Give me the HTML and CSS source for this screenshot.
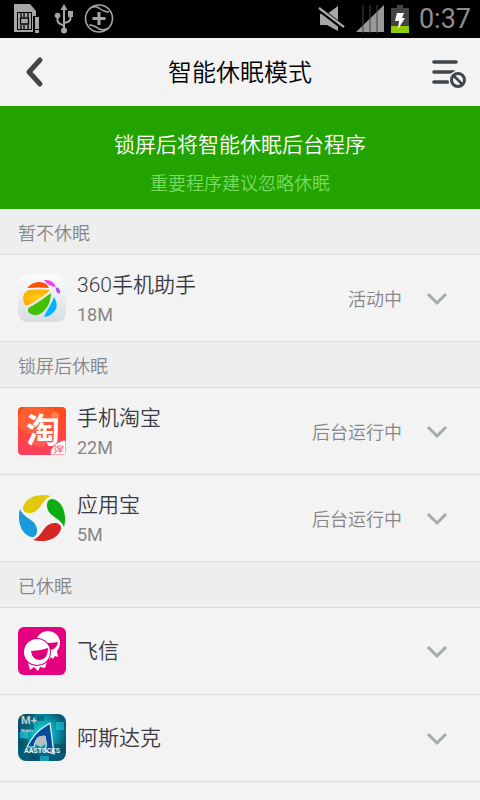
FILE: index.html
```html
<!DOCTYPE html>
<html lang="zh-CN">
<head>
    <meta charset="UTF-8">
    <meta name="viewport" content="width=device-width, initial-scale=1.0">
    <title>智能休眠模式</title>
    <link rel="stylesheet" href="styles.css">
</head>
<body>

<div class="statusbar">
    <div class="status-left">
        <svg width="28" height="32" viewBox="0 0 28 32" fill="#a6a6a6">
            <path d="M1 1h16l6 7v21H1z"/>
            <path d="M4 9h15v18H4z" fill="#000"/>
            <path d="M5 10h13v16H5z"/>
            <path d="M8 10v4M11 10v4M15 10v4M8 26v-4M11 26v-4M15 26v-4" fill="none" stroke="#000" stroke-width="1.3"/>
            <path d="M7.500 15h8v6h-8z" stroke="#000" stroke-width="1.3"/>
            <path d="M20 13h7v17h-7z" fill="#000"/>
            <path d="M22 14h4v12h-4zM22 27h4v3h-4z"/>
        </svg>
        <svg width="20" height="32" viewBox="0 0 20 32" fill="#a6a6a6">
            <path d="M10 5v22M3.500 13v4q0 3 3 4l3.500 2M16.500 11v4q0 3-3 4L10 20" fill="none" stroke="#a6a6a6" stroke-width="2"/>
            <path d="M10 1l3.500 6h-7zM14 8h5v6h-5z"/>
            <circle cx="3.500" cy="12.500" r="2.800"/>
            <circle cx="10" cy="27.500" r="3"/>
        </svg>
        <svg width="30" height="32" viewBox="0 0 30 32">
            <circle cx="15" cy="15.500" r="13.500" fill="none" stroke="#a6a6a6" stroke-width="1.600"/>
            <path d="M5 6Q10 2 15 5q5 4 10 4M5 22q5 0 10 4 5 2 10-1" fill="none" stroke="#a6a6a6" stroke-width="1.600"/>
            <path d="M15 9v13M8.500 15.500h13" stroke="#a6a6a6" stroke-width="3"/>
        </svg>
    </div>
    <div class="status-right">
        <svg width="28" height="28" viewBox="0 0 28 28">
            <path d="M2 9h7l11-8v25L9 20H2z" fill="#a6a6a6"/>
            <path d="M0 3l26 20" stroke="#000" stroke-width="5"/>
            <path d="M1 3l25 19" stroke="#a6a6a6" stroke-width="2.200"/>
        </svg>
        <svg width="28" height="28" viewBox="0 0 28 28">
            <path d="M28 0v27H0z" fill="#999"/>
            <path d="M7 0v28M14 0v28M21 0v28" stroke="#444" stroke-width="1"/>
        </svg>
        <svg width="18" height="28" viewBox="0 0 18 28">
            <path d="M6 0h6v3h6v25H0V3h6z" fill="#444"/>
            <path d="M0 21h18v7H0z" fill="#8fce00"/>
            <path d="M6 8h7l-2 5h3L7 24l1-8H4z" fill="#fff"/>
        </svg>
        <span class="clock">0:37</span>
    </div>
</div>

<header class="header">
    <button class="icon-button" aria-label="返回">
        <svg width="24" height="32" viewBox="0 0 24 32">
            <path d="M16 4L5 16l11 12" fill="none" stroke="#42464a" stroke-width="5" stroke-linecap="round" stroke-linejoin="round"/>
        </svg>
    </button>
    <h1>智能休眠模式</h1>
    <button class="icon-button" aria-label="忽略列表">
        <svg width="36" height="32" viewBox="0 0 36 32">
            <path d="M2 6h22M2 16h20M2 26h14" stroke="#42464a" stroke-width="3.600" stroke-linecap="round"/>
            <circle cx="26" cy="24" r="9.500" fill="#f3f3f3"/>
            <circle cx="26" cy="24" r="6.500" fill="none" stroke="#42464a" stroke-width="3"/>
            <path d="M21.500 19.500l9 9" stroke="#42464a" stroke-width="2.600"/>
        </svg>
    </button>
</header>

<div class="banner">
    <p class="banner-title">锁屏后将智能休眠后台程序</p>
    <p class="banner-tip">重要程序建议忽略休眠</p>
</div>

<main>
    <h2>暂不休眠</h2>
    <ul>
        <li>
            <svg class="app-icon" viewBox="0 0 48 48">
                <defs>
                    <linearGradient id="tile" x2="0" y2="1"><stop stop-color="#fcfcfd"/><stop offset="1" stop-color="#d8dde2"/></linearGradient>
                    <radialGradient id="amber"><stop stop-color="#ffd21a"/><stop offset="1" stop-color="#ffad00"/></radialGradient>
                </defs>
                <rect width="48" height="48" rx="9" fill="url(#tile)"/>
                <path d="M9 14Q14 8 21 8q8 0 10 6-10-1-22 0z" fill="#ff5000"/>
                <path d="M7 31C3 23 6 17 12 16q10-1 20 0Q22 26 10 31q-2 1-3 0z" fill="url(#amber)"/>
                <path d="M10 35q1-2 4-3 10-6 19-13 0 11-7 18-6 6-13 3-4-2-3-5z" fill="#3fc000"/>
                <path d="M36 23q4 6 2 12-4 7-12 8 1-3 4-8 4-6 6-12z" fill="#00b4ff"/>
                <path d="M26 6q9-1 12 7-7 0-12-7z" fill="#f53cf0"/>
                <ellipse cx="40" cy="16.500" rx="1.800" ry="3.200" transform="rotate(-25 40 16.500)" fill="#b750f5"/>
            </svg>
            <div class="app-info">
                <span class="app-name">360手机助手</span>
                <span class="app-size">18M</span>
            </div>
            <span class="app-state">活动中</span>
            <button class="expand" aria-label="展开 360手机助手">
                <svg width="24" height="16" viewBox="0 0 24 16"><path d="M3 4l9 9 9-9" fill="none" stroke="#a5abab" stroke-width="3"/></svg>
            </button>
        </li>
    </ul>

    <h2>锁屏后休眠</h2>
    <ul>
        <li>
            <svg class="app-icon" viewBox="0 0 48 48">
                <defs>
                    <linearGradient id="red" x2="0" y2="1"><stop stop-color="#ff4a14"/><stop offset="1" stop-color="#ff4060"/></linearGradient>
                    <clipPath id="round"><rect width="48" height="48" rx="4"/></clipPath>
                </defs>
                <g clip-path="url(#round)">
                    <rect width="48" height="48" fill="url(#red)"/>
                    <circle cx="14" cy="13" r="14" fill="#ff824c" opacity=".4"/>
                    <circle cx="29" cy="12" r="12" fill="#ff7040" opacity=".4"/>
                    <circle cx="37" cy="9" r="4" fill="#ff9160" opacity=".7"/>
                    <circle cx="22" cy="31" r="9" fill="#ff7950" opacity=".5"/>
                    <text class="tao" x="25" y="36">淘</text>
                    <path d="M32 48q0-11 14-15l2 1v14z" fill="#fff" stroke="#ff4858"/>
                    <path d="M36 39l2 1m-2 2h2v3l-2 1M39 39h6v2h-6zM40 42h4m-5 2h6m-3-2v4" stroke="#ff4060" stroke-width=".8" fill="none"/>
                </g>
            </svg>
            <div class="app-info">
                <span class="app-name">手机淘宝</span>
                <span class="app-size">22M</span>
            </div>
            <span class="app-state">后台运行中</span>
            <button class="expand" aria-label="展开 手机淘宝">
                <svg width="24" height="16" viewBox="0 0 24 16"><path d="M3 4l9 9 9-9" fill="none" stroke="#a5abab" stroke-width="3"/></svg>
            </button>
        </li>
        <li>
            <svg class="app-icon" viewBox="0 0 48 48">
                <defs>
                    <path id="blade" d="M33 2C23-1 8 2 5 13c-1 6 7 8 13 4 5-3 7-12 15-15z"/>
                </defs>
                <use href="#blade" fill="#e2c80a"/>
                <use href="#blade" fill="#0bae12" transform="rotate(90 24 24)"/>
                <use href="#blade" fill="#d62626" transform="rotate(180 24 24)"/>
                <use href="#blade" fill="#1a99dc" transform="rotate(270 24 24)"/>
            </svg>
            <div class="app-info">
                <span class="app-name">应用宝</span>
                <span class="app-size">5M</span>
            </div>
            <span class="app-state">后台运行中</span>
            <button class="expand" aria-label="展开 应用宝">
                <svg width="24" height="16" viewBox="0 0 24 16"><path d="M3 4l9 9 9-9" fill="none" stroke="#a5abab" stroke-width="3"/></svg>
            </button>
        </li>
    </ul>

    <h2>已休眠</h2>
    <ul>
        <li>
            <svg class="app-icon" viewBox="0 0 48 48">
                <rect width="48" height="48" rx="6" fill="#e4007f"/>
                <circle cx="30" cy="16" r="12" fill="#fff"/>
                <path d="M31 26l8-2 1 6-3-1-2 3-2-2-2 3z" fill="#fff"/>
                <path d="M29 16q6 0 11-1-1 7-8 8z" fill="#e4007f"/>
                <circle cx="19" cy="25" r="14" fill="#e4007f"/>
                <circle cx="19" cy="25" r="13" fill="#fff"/>
                <path d="M10 36l2 7 4-3 4 4 2-4 5 1 2-6q-9 6-19 1z" fill="#fff"/>
                <path d="M9 35q10 7 20 0" fill="none" stroke="#e4007f"/>
                <path d="M13 24q9 0 17-3 0 11-8 12-8 0-9-9z" fill="#e4007f"/>
                <path d="M17 30q5-5 11-2-3 4-6 4t-5-2z" fill="#c8006c"/>
            </svg>
            <div class="app-info">
                <span class="app-name">飞信</span>
            </div>
            <button class="expand" aria-label="展开 飞信">
                <svg width="24" height="16" viewBox="0 0 24 16"><path d="M3 4l9 9 9-9" fill="none" stroke="#a5abab" stroke-width="3"/></svg>
            </button>
        </li>
        <li>
            <svg class="app-icon" viewBox="0 0 48 48">
                <defs>
                    <radialGradient id="teal" cx=".5" cy=".4"><stop stop-color="#20dce2"/><stop offset=".6" stop-color="#0b98ad"/><stop offset="1" stop-color="#075b78"/></radialGradient>
                    <clipPath id="square"><rect width="48" height="47" rx="8"/></clipPath>
                </defs>
                <g clip-path="url(#square)">
                    <rect width="48" height="48" fill="url(#teal)"/>
                    <path d="M0 0h16v18H0zM0 25h10v9H0zM36 30h12v9H36zM19 2h7v5h-7zM12 40h9v8h-9z" fill="#064b62" opacity=".55"/>
                    <path d="M38 8h8v8h-8zM22 42h9v6h-9zM2 18h8v6H2z" fill="#29d9e5" opacity=".5"/>
                    <path d="M9 33q7-14 17-20l6-4 4 31-9-3q3-8-1-15-9 1-10 11z" fill="#074c9a" stroke="#d4fff0" stroke-width="1.200"/>
                    <path d="M17 30q0-6 5-8h6l-1 8-4 3z" fill="#b9bec5"/>
                    <text class="mobile-mark" x="3" y="10">M+</text>
                    <text class="mobile-label" x="3" y="18">Mobile</text>
                    <text class="stocks" x="24" y="39">AASTOCKS</text>
                </g>
            </svg>
            <div class="app-info">
                <span class="app-name">阿斯达克</span>
            </div>
            <button class="expand" aria-label="展开 阿斯达克">
                <svg width="24" height="16" viewBox="0 0 24 16"><path d="M3 4l9 9 9-9" fill="none" stroke="#a5abab" stroke-width="3"/></svg>
            </button>
        </li>
    </ul>
</main>

</body>
</html>
```
FILE: styles.css
```css
* {
    box-sizing: border-box;
    margin: 0;
    padding: 0;
}
body {
    font-family: Roboto, "Noto Sans CJK SC", sans-serif;
    font-weight: 350;
    background-color: #f3f3f3;
    color: #3b3b45;
}
button {
    border: none;
    background: none;
    cursor: pointer;
}
svg {
    display: block;
}
.statusbar {
    display: flex;
    justify-content: space-between;
    align-items: center;
    height: 38px;
    padding: 0 9px 0 13px;
    background: #000;
}
.status-left {
    display: flex;
    gap: 13px;
}
.status-left svg:last-child {
    margin-left: -3px;
}
.status-right {
    display: flex;
    align-items: center;
    gap: 10px;
}
.status-right svg:nth-child(3) {
    margin-left: -3px;
}
.clock {
    font-size: 27px;
    font-weight: 400;
    line-height: 38px;
    color: #8e8e8e;
}
.header {
    display: flex;
    justify-content: space-between;
    align-items: center;
    height: 68px;
    padding: 0 12px 4px;
}
.header h1 {
    font-size: 24px;
    font-weight: 350;
    color: #000;
}
.icon-button {
    display: flex;
    justify-content: flex-end;
    width: 36px;
    padding-top: 4px;
}
.banner {
    padding: 24px 0 10px;
    background: #22a300;
    text-align: center;
}
.banner-title {
    font-size: 21px;
    line-height: 30px;
    color: #fff;
}
.banner-tip {
    margin-top: 9px;
    font-size: 18px;
    line-height: 30px;
    color: #7bdc62;
}
h2 {
    padding: 4px 18px 0;
    font-size: 18px;
    font-weight: 350;
    line-height: 41px;
    color: #868686;
    background: #eee;
    border-bottom: 1px solid #dcdcdc;
}
ul {
    list-style: none;
}
li {
    display: flex;
    align-items: center;
    height: 87px;
    padding: 0 28px 0 18px;
    border-bottom: 1px solid #dcdcdc;
}
.app-icon {
    width: 48px;
    height: 48px;
    margin-right: 11px;
}
.app-info {
    flex: 1;
    display: flex;
    flex-direction: column;
}
.app-name {
    font-size: 21px;
    line-height: 30px;
}
.app-size {
    margin-bottom: -4px;
    font-size: 18px;
    font-weight: 400;
    line-height: 30px;
    color: #868686;
}
.app-state {
    font-size: 18px;
    color: #868686;
}
.expand {
    padding: 10px 3px 10px 23px;
}
.tao {
    font-size: 34px;
    font-weight: bold;
    text-anchor: middle;
    fill: #fff;
}
.mobile-mark {
    font-size: 11px;
    font-weight: bold;
    fill: #c4d0d3;
}
.mobile-label {
    font-size: 4px;
    font-weight: bold;
    fill: #d5e0e2;
}
.stocks {
    font-size: 7px;
    font-weight: bold;
    text-anchor: middle;
    fill: #eef4f6;
}
```
